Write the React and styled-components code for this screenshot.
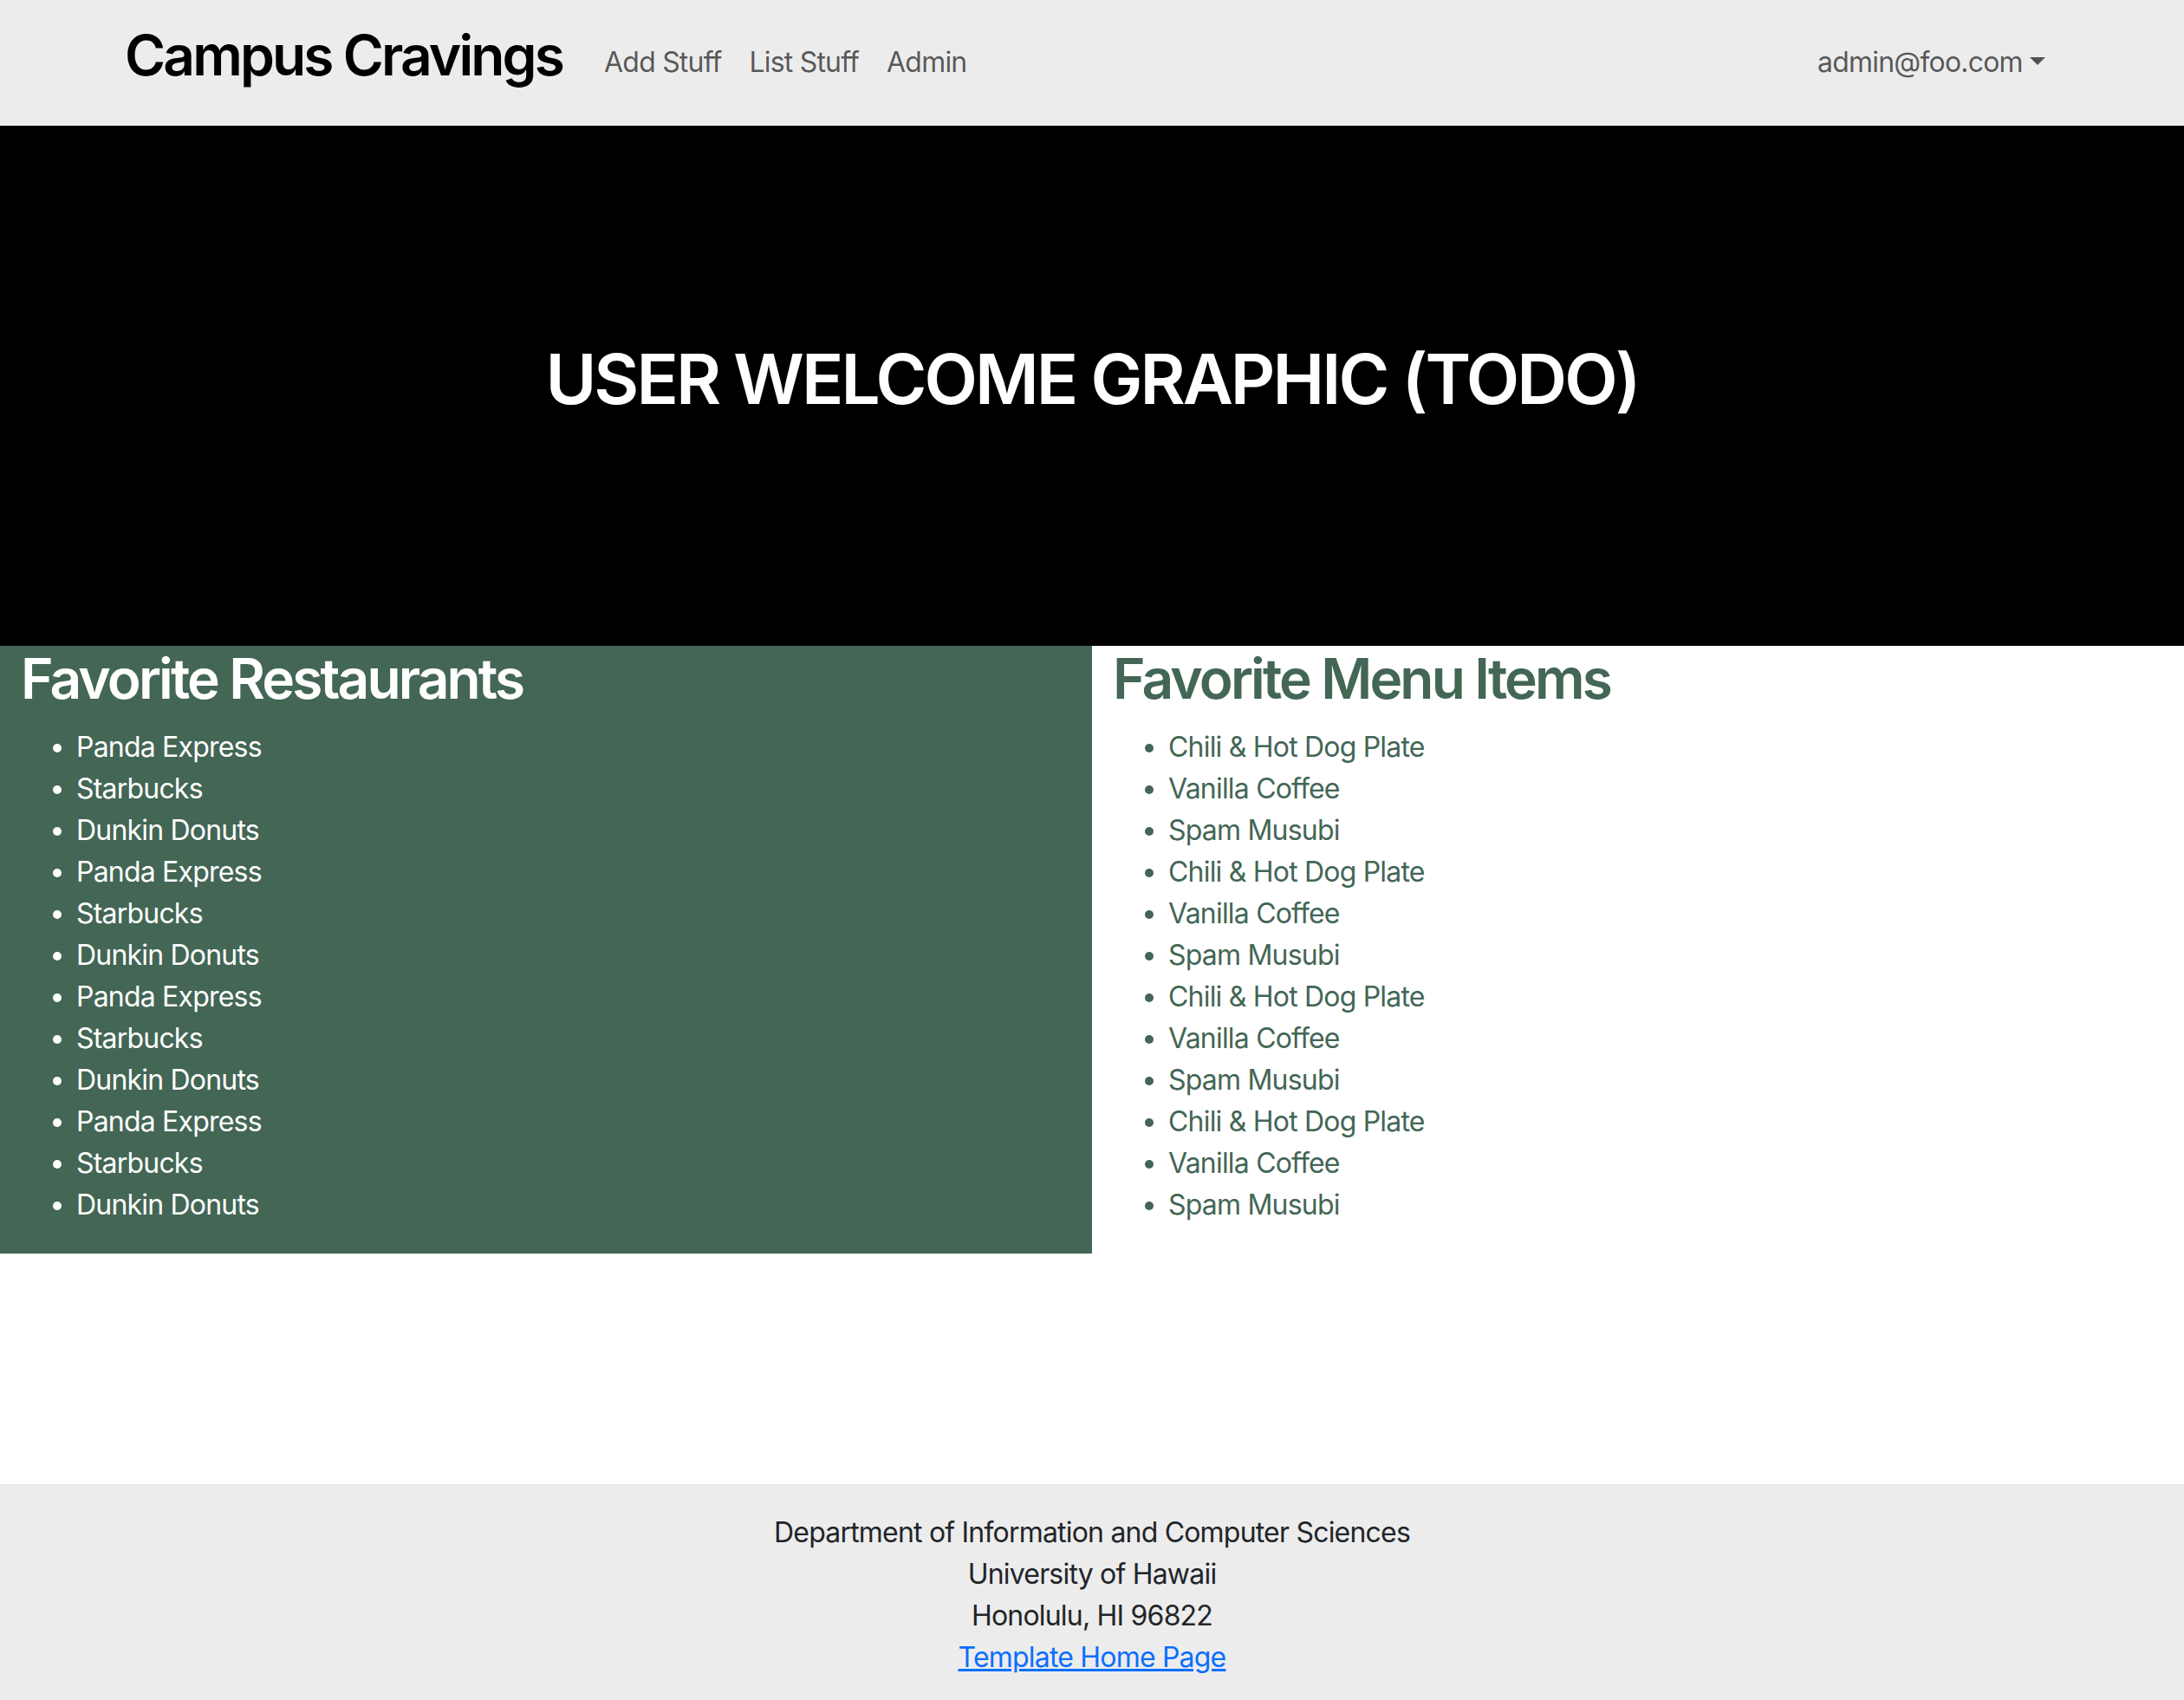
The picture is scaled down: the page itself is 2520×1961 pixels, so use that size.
import React from "react";
import styled, { createGlobalStyle } from "styled-components";

const GlobalStyle = createGlobalStyle`
  html, body { margin: 0; padding: 0; }
  body {
    font-family: Inter, "Noto Sans", "Liberation Sans", sans-serif;
    font-size: 32px;
    line-height: 1.5;
    letter-spacing: -0.025em;
    color: #212529;
    background: #ffffff;
  }
  * { box-sizing: border-box; }
`;

const GREEN = "#436655";

const Navbar = styled.nav`
  background: #ececec;
  padding: 16px 0;
`;

const NavContainer = styled.div`
  max-width: 2280px;
  margin: 0 auto;
  padding: 0 24px;
  display: flex;
  align-items: center;
`;

const Brand = styled.a`
  font-size: 64px;
  line-height: 1.2;
  font-weight: 600;
  letter-spacing: -0.045em;
  color: #000;
  text-decoration: none;
  padding: 10px 0 26px;
  margin-right: 32px;
  white-space: nowrap;
`;

const NavList = styled.div`
  display: flex;
  align-items: center;
  flex: 1;
`;

const NavLink = styled.a`
  padding: 0 16px;
  color: rgba(0, 0, 0, 0.65);
  text-decoration: none;
  font-size: 32px;
  line-height: 48px;
`;

const Dropdown = styled.a`
  margin-left: auto;
  padding: 0 16px;
  color: rgba(0, 0, 0, 0.65);
  text-decoration: none;
  font-size: 32px;
  line-height: 48px;
  white-space: nowrap;
  &::after {
    content: "";
    display: inline-block;
    margin-left: 0.255em;
    vertical-align: 0.255em;
    border-top: 0.3em solid;
    border-right: 0.3em solid transparent;
    border-left: 0.3em solid transparent;
  }
`;

const Hero = styled.section`
  height: 600px;
  background: #000;
  display: flex;
  align-items: center;
  justify-content: center;
`;

const HeroTitle = styled.h1`
  color: #fff;
  font-size: 80px;
  line-height: 1.2;
  font-weight: 600;
  letter-spacing: -0.037em;
  margin: 0 0 16px;
`;

const Columns = styled.div`
  display: grid;
  grid-template-columns: 1fr 1fr;
  margin-bottom: 266px;
`;

const Column = styled.div`
  padding: 0 24px;
  background: ${(p) => (p.$filled ? GREEN : "transparent")};
  color: ${(p) => (p.$filled ? "#fff" : GREEN)};
`;

const ColumnTitle = styled.h2`
  font-size: 64px;
  line-height: 1.2;
  font-weight: 600;
  letter-spacing: -0.045em;
  margin: 0 0 16px;
`;

const ItemList = styled.ul`
  margin: 0 0 32px;
  padding-left: 64px;
`;

const Item = styled.li`
  font-size: 32px;
  line-height: 48px;
`;

const Footer = styled.footer`
  background: #ececec;
  padding: 32px 0;
  text-align: center;
`;

const FooterLine = styled.div`
  font-size: 32px;
  line-height: 48px;
  color: #212529;
`;

const FooterLink = styled.a`
  color: #0d6efd;
  text-decoration: underline;
`;

const restaurants = ["Panda Express", "Starbucks", "Dunkin Donuts"];
const menuItems = ["Chili & Hot Dog Plate", "Vanilla Coffee", "Spam Musubi"];
const repeat = (arr, n) => Array.from({ length: n }, () => arr).flat();

export default function App() {
  return (
    <>
      <GlobalStyle />
      <Navbar>
        <NavContainer>
          <Brand href="#">Campus Cravings</Brand>
          <NavList>
            <NavLink href="#">Add Stuff</NavLink>
            <NavLink href="#">List Stuff</NavLink>
            <NavLink href="#">Admin</NavLink>
            <Dropdown href="#">admin@foo.com</Dropdown>
          </NavList>
        </NavContainer>
      </Navbar>
      <Hero>
        <HeroTitle>USER WELCOME GRAPHIC (TODO)</HeroTitle>
      </Hero>
      <Columns>
        <Column $filled>
          <ColumnTitle>Favorite Restaurants</ColumnTitle>
          <ItemList>
            {repeat(restaurants, 4).map((r, i) => (
              <Item key={i}>{r}</Item>
            ))}
          </ItemList>
        </Column>
        <Column>
          <ColumnTitle>Favorite Menu Items</ColumnTitle>
          <ItemList>
            {repeat(menuItems, 4).map((m, i) => (
              <Item key={i}>{m}</Item>
            ))}
          </ItemList>
        </Column>
      </Columns>
      <Footer>
        <FooterLine>Department of Information and Computer Sciences</FooterLine>
        <FooterLine>University of Hawaii</FooterLine>
        <FooterLine>Honolulu, HI 96822</FooterLine>
        <FooterLine>
          <FooterLink href="#">Template Home Page</FooterLink>
        </FooterLine>
      </Footer>
    </>
  );
}
